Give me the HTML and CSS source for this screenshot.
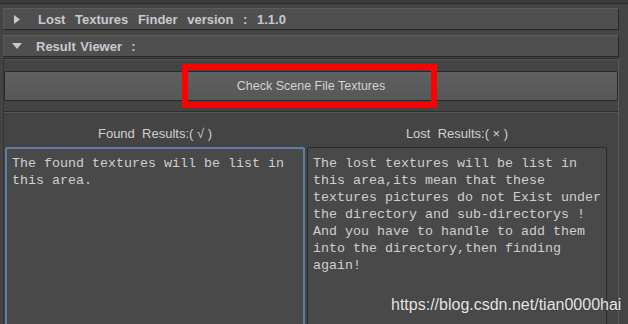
FILE: index.html
```html
<!DOCTYPE html>
<html lang="en">
<head>
    <meta charset="UTF-8">
    <meta name="viewport" content="width=device-width, initial-scale=1.0">
    <title>Lost Textures Finder</title>
    <link rel="stylesheet" href="styles.css">
</head>
<body>
    <div class="topbar"></div>
    <div class="frame-header">
        <svg class="arrow" width="6" height="9" viewBox="0 0 6 9"><path d="M0 0 L6 4.5 L0 9 Z" fill="#c8c8c8"/></svg>
        <span class="frame-title">Lost Textures Finder version : 1.1.0</span>
    </div>
    <div class="frame-header second">
        <svg class="arrow" width="10" height="6" viewBox="0 0 10 6"><path d="M0 0 L10 0 L5 6 Z" fill="#c8c8c8"/></svg>
        <span class="frame-title">Result Viewer&nbsp; :</span>
    </div>
    <div class="panel">
        <button class="check-btn">Check Scene File Textures</button>
        <div class="separator"></div>
        <div class="results">
            <div class="column">
                <div class="col-label">Found&nbsp; Results:( √ )</div>
                <div class="result-box found">The found textures will be list in
this area.</div>
            </div>
            <div class="column">
                <div class="col-label">Lost&nbsp; Results:( × )</div>
                <div class="result-box">The lost textures will be list in
this area,its mean that these
textures pictures do not Exist under
the directory and sub-directorys !
And you have to handle to add them
into the directory,then finding
again!</div>
            </div>
        </div>
    </div>

    <div class="highlight"></div>
    <div class="watermark">https://blog.csdn.net/tian0000hai</div>
</body>
</html>
```
FILE: styles.css
```css
html, body {
    margin: 0;
    height: 324px;
    overflow: hidden;
}
body {
    background-color: #444444;
    font-family: "Liberation Sans", Arial, sans-serif;
    color: #cccccc;
    position: relative;
}
.topbar {
    height: 3px;
    background-color: #3c3c3c;
    border-bottom: 1px solid #2d2d2d;
    margin-bottom: 4px;
}
.frame-header {
    display: flex;
    align-items: center;
    height: 20px;
    margin: 0 9px 0 3px;
    padding-left: 10px;
    background-color: #4f4f4f;
    border-top: 1px solid #5c5c5c;
    border-left: 1px solid #585858;
    border-bottom: 1px solid #262626;
    border-right: 1px solid #262626;
}
.frame-header.second {
    margin-top: 5px;
    padding-left: 8px;
}
.arrow {
    flex-shrink: 0;
}
.frame-title {
    margin-left: 18px;
    font-size: 13px;
    font-weight: bold;
    word-spacing: 6px;
    color: #c6cad0;
}
.frame-header.second .frame-title {
    margin-left: 14px;
    word-spacing: 1px;
}
.panel {
    margin: 1px 9px 0 3px;
    padding: 12px 0 0 0;
    border-top: 1px solid #2b2b2b;
    border-left: 1px solid #333333;
    border-right: 1px solid #5a5a5a;
    box-shadow: inset 0 1px 0 #555555;
    height: 300px;
}
.check-btn {
    display: block;
    width: 100%;
    height: 30px;
    margin: 0;
    background: linear-gradient(#606060, #575757);
    border: 1px solid #2a2a2a;
    border-radius: 2px;
    color: #d2d2d2;
    font-family: "Liberation Sans", Arial, sans-serif;
    font-size: 12.5px;
}
.separator {
    margin-top: 10px;
    height: 1px;
    background-color: #2e2e2e;
    border-bottom: 1px solid #545454;
}
.results {
    display: flex;
    gap: 2px;
    padding: 0 11px 0 1px;
}
.column {
    width: 300px;
}
.col-label {
    height: 16px;
    margin: 13px 0 5px;
    text-align: center;
    font-size: 13px;
    color: #d0d0d0;
}
.result-box {
    height: 200px;
    padding: 7px 5px 5px;
    background-color: #494949;
    border: 1px solid #2a2a2a;
    border-radius: 2px;
    font-family: "Liberation Mono", "Courier New", monospace;
    font-size: 13.33px;
    line-height: 17px;
    color: #cfcfcf;
    white-space: pre;
}
.result-box.found {
    border: 2px solid #5d7fa6;
    padding: 6px 5px 4px;
}
.highlight {
    position: absolute;
    left: 182px;
    top: 64px;
    width: 243px;
    height: 32px;
    border: 6px solid #ff0000;
}
.watermark {
    position: absolute;
    left: 391px;
    top: 296px;
    font-family: "Liberation Sans", Arial, sans-serif;
    font-size: 16px;
    color: #e6e6e6;
    text-shadow: 0 0 1px #333333;
}
```
